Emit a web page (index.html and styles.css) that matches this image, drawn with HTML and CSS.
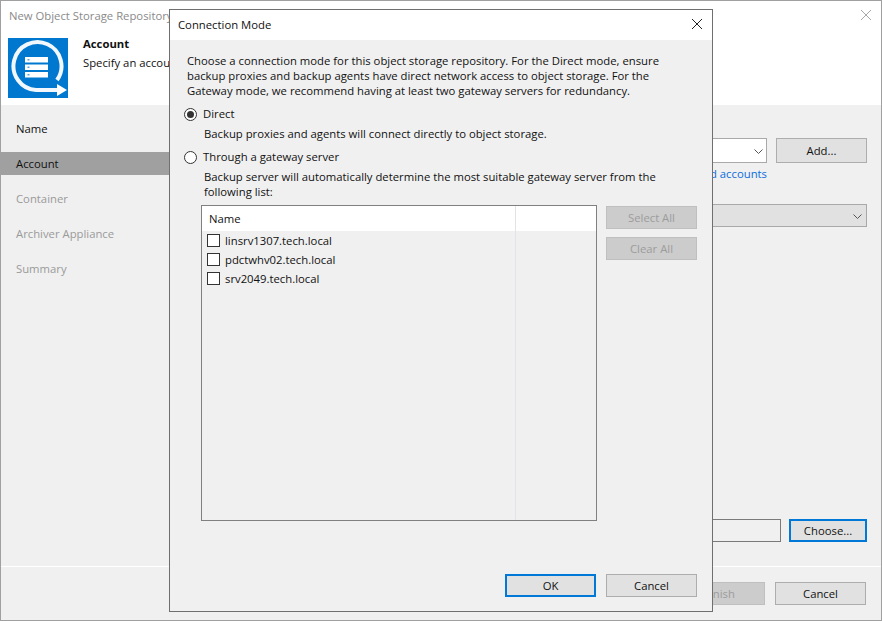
FILE: index.html
```html
<!DOCTYPE html>
<html lang="en">
<head>
<meta charset="utf-8">
<title>Connection Mode</title>
<link rel="stylesheet" href="styles.css">
</head>
<body>
<div class="window">
  <div class="head">
    <div class="titlebar">
      <span class="wintitle">New Object Storage Repository</span>
      <svg class="x" width="16" height="16" viewBox="0 0 16 16"><path d="M3 3l10 10M13 3L3 13" stroke="#a8a8a8" stroke-width="1" fill="none"/></svg>
    </div>
    <div class="headrow">
      <svg class="logo" width="60" height="60" viewBox="0 0 60 60">
        <rect width="60" height="60" fill="#0078d0"/>
        <path d="M49 42A24 24 0 1 0 28 52H50" fill="none" stroke="#fff" stroke-width="4" opacity=".95"/>
        <path d="M49 46L59 52L49 58Z" fill="#fff"/>
        <rect x="17" y="19" width="23" height="5.500" fill="#fff"/>
        <rect x="17" y="26.500" width="23" height="5.500" fill="#fff"/>
        <rect x="17" y="34" width="23" height="5.500" fill="#fff"/>
        <path d="M19.500 21.700h2M19.500 29.200h2M19.500 36.700h2" stroke="#5aa3dd" stroke-width="1.500"/>
      </svg>
      <div class="headtext">
        <div class="headtitle">Account</div>
        <div>Specify an account</div>
      </div>
    </div>
  </div>
  <div class="body">
    <nav class="steps">
      <div class="step">Name</div>
      <div class="step active">Account</div>
      <div class="step off">Container</div>
      <div class="step off">Archiver Appliance</div>
      <div class="step off">Summary</div>
    </nav>
    <main class="pane">
      <div class="row first">
        <div class="combo"><svg class="chev" width="9" height="5" viewBox="0 0 9 5"><path d="M.5.500L4.500 4.500L8.500.500" fill="none" stroke="#555"/></svg></div>
        <button class="btn add">Add...</button>
      </div>
      <div class="linkrow"><a class="link">cloud accounts</a></div>
      <div class="combo wide"><svg class="chev" width="9" height="5" viewBox="0 0 9 5"><path d="M.5.500L4.500 4.500L8.500.500" fill="none" stroke="#555"/></svg></div>
      <div class="spacer"></div>
      <div class="row choose">
        <div class="field"></div>
        <button class="btn focus choosebtn">Choose...</button>
      </div>
    </main>
  </div>
  <div class="foot">
    <button class="btn disabled finish">Finish</button>
    <button class="btn">Cancel</button>
  </div>
</div>

<section class="dialog">
  <div class="dtitle">
    <span>Connection Mode</span>
    <svg class="dclose" width="12" height="12" viewBox="0 0 12 12"><path d="M1 1l10 10M11 1L1 11" stroke="#222" fill="none"/></svg>
  </div>
  <div class="dbody">
    <p class="intro">Choose a connection mode for this object storage repository. For the Direct mode, ensure<br>backup proxies and backup agents have direct network access to object storage. For the<br>Gateway mode, we recommend having at least two gateway servers for redundancy.</p>
    <div class="radio r1"><span class="dot on"></span>Direct</div>
    <p class="hint h1">Backup proxies and agents will connect directly to object storage.</p>
    <div class="radio r2"><span class="dot"></span>Through a gateway server</div>
    <p class="hint h2">Backup server will automatically determine the most suitable gateway server from the<br>following list:</p>
    <div class="listrow">
      <div class="list">
        <div class="lhead">Name</div>
        <div class="litem"><span class="check"></span>linsrv1307.tech.local</div>
        <div class="litem"><span class="check"></span>pdctwhv02.tech.local</div>
        <div class="litem"><span class="check"></span>srv2049.tech.local</div>
      </div>
      <div class="side">
        <button class="btn disabled">Select All</button>
        <button class="btn disabled">Clear All</button>
      </div>
    </div>
    <div class="dfoot">
      <button class="btn focus">OK</button>
      <button class="btn">Cancel</button>
    </div>
  </div>
</section>
</body>
</html>
```
FILE: styles.css
```css
* { box-sizing: border-box; }
html, body { margin: 0; padding: 0; }
body {
  width: 882px;
  height: 621px;
  position: relative;
  overflow: hidden;
  font-family: "Open Sans", "Noto Sans", sans-serif;
  font-size: 11.3px;
  line-height: 16px;
  color: #111;
  background: #f0f0f0;
}
p { margin: 0; }

.btn {
  font: inherit;
  color: #111;
  width: 91px;
  height: 23px;
  padding: 0;
  background: #e1e1e1;
  border: 1px solid #adadad;
  border-radius: 0;
}
.btn.focus { border: 2px solid #0078d7; }
.btn.disabled { background: #cccccc; border-color: #bfbfbf; color: #9c9c9c; }

.window {
  width: 882px;
  height: 621px;
  border: 1px solid #a0a0a0;
  display: flex;
  flex-direction: column;
  background: #f0f0f0;
}
.head { height: 104px; background: #fff; flex: none; }
.titlebar { display: flex; justify-content: space-between; padding: 6px 7px 0 8px; height: 37px; }
.wintitle { color: #8a8a8a; margin-top: 1px; }
.headrow { display: flex; padding-left: 7px; }
.logo { flex: none; }
.headtext { margin-left: 15px; margin-top: -2px; display: flex; flex-direction: column; gap: 3px; }
.headtitle { font-weight: 700; }

.body { flex: 1; display: flex; min-height: 0; }
.steps { width: 200px; flex: none; padding-top: 12px; }
.step { height: 23px; line-height: 23px; padding-left: 15px; margin-bottom: 12px; }
.step.active { background: #a0a0a0; }
.step.off { color: #9a9a9a; }

.pane { flex: 1; display: flex; flex-direction: column; padding: 33px 14px 0 0; align-items: stretch; }
.row { display: flex; }
.first { height: 25px; }
.combo {
  flex: 1;
  background: #fff;
  border: 1px solid #a9a9a9;
  display: flex;
  align-items: center;
  justify-content: flex-end;
  padding-right: 3px;
}
.chev { margin-top: 1px; }
.btn.add { margin-left: 9px; width: 91px; height: 25px; }
.linkrow { text-align: right; padding-right: 100px; height: 41px; padding-top: 3px; }
.link { color: #0a6cdc; }
.combo.wide { flex: none; height: 23px; background: #e1e1e1; padding-right: 4px; }
.spacer { flex: 1; }
.choose { height: 23px; margin-bottom: 24px; }
.field { flex: 1; background: #f0f0f0; border: 1px solid #7a7a7a; border-left: 0; margin-right: 8px; height: 23px; }
.btn.choosebtn { width: 78px; height: 23px; }

.foot {
  flex: none;
  height: 54px;
  border-top: 1px solid #fff;
  display: flex;
  justify-content: flex-end;
  gap: 10px;
  padding: 15px 15px 0 0;
}

.dialog {
  position: absolute;
  left: 169px;
  top: 9px;
  width: 544px;
  height: 603px;
  background: #f0f0f0;
  border: 1px solid #6f6f6f;
  display: flex;
  flex-direction: column;
}
.dtitle {
  height: 30px;
  flex: none;
  background: #fff;
  display: flex;
  align-items: center;
  justify-content: space-between;
  padding: 0 9px 0 8px;
}
.dclose { margin-top: -2px; }
.dbody { flex: 1; display: flex; flex-direction: column; padding: 13px 15px 14px 17px; min-height: 0; }
.intro { line-height: 15px; }
.radio { display: flex; align-items: center; gap: 6px; height: 16px; margin-left: -3px; }
.r1 { margin-top: 8px; }
.r2 { margin-top: 8px; }
.dot {
  width: 13px;
  height: 13px;
  border-radius: 50%;
  background: #fff;
  border: 1px solid #333;
  position: relative;
  flex: none;
}
.dot.on::after {
  content: "";
  position: absolute;
  inset: 2px;
  border-radius: 50%;
  background: #333;
}
.hint { padding-left: 17px; line-height: 15px; }
.h1 { margin-top: 4px; }
.h2 { margin-top: 4px; }
.listrow { display: flex; gap: 9px; margin-top: 6px; }
.list {
  width: 396px;
  height: 316px;
  border: 1px solid #808080;
  margin-left: 14px;
  flex: none;
  background: linear-gradient(#e3e3ea, #e3e3ea) 313px 0 / 1px 100% no-repeat #f0f0f0;
}
.lhead {
  height: 25px;
  line-height: 25px;
  padding-left: 7px;
  background: linear-gradient(#e3e3e3, #e3e3e3) 313px 0 / 1px 100% no-repeat #fff;
}
.litem { display: flex; align-items: center; gap: 5px; height: 19px; padding-left: 5px; }
.check { width: 13px; height: 13px; background: #fff; border: 1px solid #333; flex: none; }
.side { display: flex; flex-direction: column; gap: 8px; margin-top: 1px; }
.dfoot { margin-top: auto; display: flex; justify-content: flex-end; gap: 10px; }
```
